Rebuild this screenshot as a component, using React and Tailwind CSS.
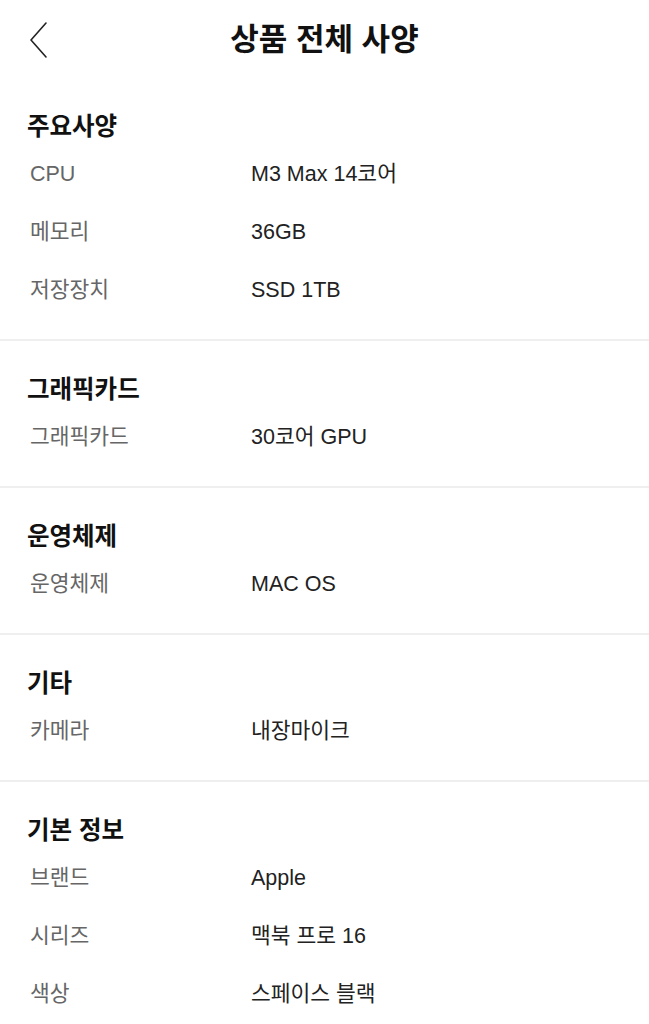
import React from "react";

const sections = [
  {
    title: "주요사양",
    rows: [
      ["CPU", "M3 Max 14코어"],
      ["메모리", "36GB"],
      ["저장장치", "SSD 1TB"],
    ],
  },
  { title: "그래픽카드", rows: [["그래픽카드", "30코어 GPU"]] },
  { title: "운영체제", rows: [["운영체제", "MAC OS"]] },
  { title: "기타", rows: [["카메라", "내장마이크"]] },
  {
    title: "기본 정보",
    rows: [
      ["브랜드", "Apple"],
      ["시리즈", "맥북 프로 16"],
      ["색상", "스페이스 블랙"],
    ],
  },
];

const App = () => {
  return (
    <div className="min-h-screen bg-white text-[#111] font-['Liberation_Sans','Noto_Sans_CJK_KR',sans-serif]">
      {/* Header */}
      <header className="relative h-[78px] flex items-center justify-center">
        <button className="absolute left-[26px] top-[20px] w-[24px] h-[40px] flex items-center justify-center">
          <svg width="20" height="38" viewBox="0 0 20 38" fill="none">
            <path d="M18 2 L3 19 L18 36" stroke="#222" strokeWidth="1.6" strokeLinecap="round" strokeLinejoin="round" />
          </svg>
        </button>
        <h1 className="text-[31px] font-bold leading-none">상품 전체 사양</h1>
      </header>

      {sections.map((section, i) => (
        <section key={section.title} className={i > 0 ? "border-t-2 border-[#efefef]" : ""}>
          <div className="pt-[34px] pb-[20px] px-[27px]">
            <h2 className="text-[24.5px] font-bold leading-[30px] mb-[3px]">{section.title}</h2>
            {section.rows.map(([label, value]) => (
              <div key={label} className="h-[58px] flex items-center text-[21.5px]">
                <span className="w-[224px] pl-[3px] text-[#666]">{label}</span>
                <span className="text-[#222]">{value}</span>
              </div>
            ))}
          </div>
        </section>
      ))}
    </div>
  );
};

export default App;
